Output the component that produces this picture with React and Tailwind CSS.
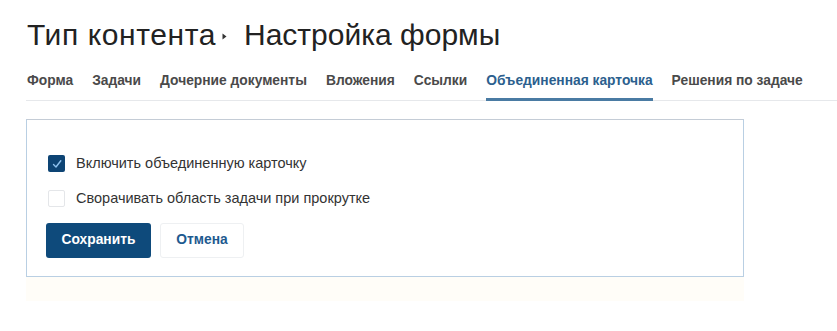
import React from "react";

const tabs = [
  "Форма",
  "Задачи",
  "Дочерние документы",
  "Вложения",
  "Ссылки",
  "Объединенная карточка",
  "Решения по задаче",
];

export default function App() {
  return (
    <div className="w-[837px] h-[331px] bg-white overflow-hidden" style={{ fontFamily: '"Liberation Sans", Arial, sans-serif' }}>
      <div className="pl-[27px] pt-[17px]">
        <h1 className="text-[30px] leading-[36px] text-[#222] flex items-center">
          <span className="tracking-[0.6px]">Тип контента</span>
          <svg className="ml-[6px] mr-[17px] mt-[3px]" width="5" height="7" viewBox="0 0 5 7">
            <path d="M0.5 0.5 L4.5 3.5 L0.5 6.5 Z" fill="#333" />
          </svg>
          <span>Настройка формы</span>
        </h1>
      </div>
      <div className="ml-[26px] mt-[20px] border-b border-[#e6e8eb] flex gap-[19px] pl-[1px]">
        {tabs.map((t, i) => {
          const active = i === 5;
          return (
            <div
              key={t}
              className={
                "text-[13.8px] leading-[16px] font-bold pb-[9px] -mb-px border-b-[3px] " +
                (active ? "text-[#2c5f8e] border-[#4a7ba3]" : "text-[#4a4a4a] border-transparent")
              }
            >
              {t}
            </div>
          );
        })}
      </div>
      <div className="ml-[26px] mt-[18px] w-[718px] h-[158px] border border-[#b9cfe3] border-t-[#c4ccd6] pl-[19px] pt-[35px]">
        <div className="flex flex-col gap-[18px] pl-[2px]">
          <label className="flex items-center gap-[11px] h-[17px]">
            <span className="w-[17px] h-[17px] rounded-[2px] bg-[#0d4474] flex items-center justify-center">
              <svg width="12" height="12" viewBox="0 0 12 12">
                <path d="M2.5 6.5 L5 9 L9.8 2.8" fill="none" stroke="#8ec1ee" strokeWidth="1.4" strokeLinecap="round" strokeLinejoin="round" />
              </svg>
            </span>
            <span className="text-[14.5px] leading-[17px] text-[#333]">Включить объединенную карточку</span>
          </label>
          <label className="flex items-center gap-[11px] h-[17px]">
            <span className="w-[17px] h-[17px] rounded-[2px] border border-[#e4e6e9] bg-white" />
            <span className="text-[14.5px] leading-[17px] text-[#333]">Сворачивать область задачи при прокрутке</span>
          </label>
        </div>
        <div className="flex gap-[9px] mt-[16px]">
          <button className="w-[105px] h-[35px] rounded-[3px] bg-[#0e4a7b] text-white text-[13.8px] font-bold">
            Сохранить
          </button>
          <button className="w-[84px] h-[35px] rounded-[3px] border border-[#eef0f2] bg-white text-[#1e5a8f] text-[13.8px] font-bold">
            Отмена
          </button>
        </div>
      </div>
      <div className="ml-[26px] w-[718px] h-[24px] bg-[#fffdf8]" />
    </div>
  );
}
